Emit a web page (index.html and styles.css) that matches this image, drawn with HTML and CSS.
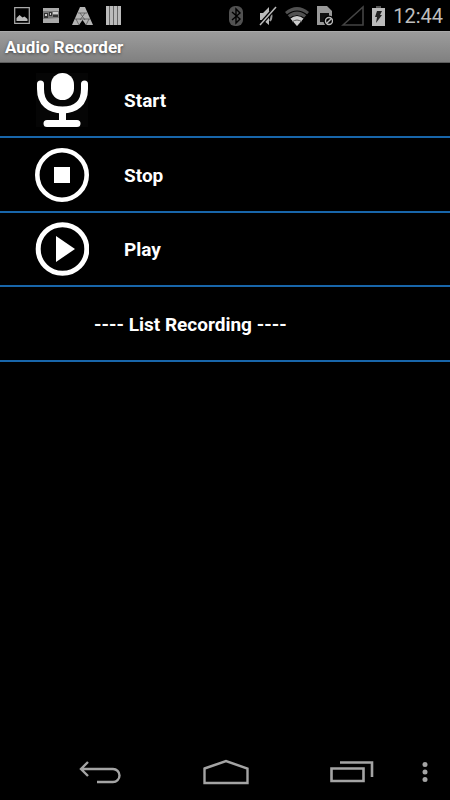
FILE: index.html
```html
<!DOCTYPE html>
<html lang="en">
<head>
<meta charset="utf-8">
<meta name="viewport" content="width=device-width, initial-scale=1">
<title>Audio Recorder</title>
<link rel="stylesheet" href="styles.css">
</head>
<body>
<div class="status">
  <div class="status-group notices">
    <svg width="16" height="17" viewBox="0 0 16 17"><path d="M.7.7h14.6v15.6H.7z" fill="none" stroke="#aaa" stroke-width="1.2"/><path d="M2.500 14V11L5.500 8l3 2.500 2-1 3 2.500V14z" fill="#bbb"/></svg>
    <svg width="16" height="15" viewBox="0 0 16 15"><path d="M0 0h16v15H0z" fill="#777"/><path d="M0 0h16v3H0zM0 11l16-1v5H0z" fill="#aaa"/><path d="M1 5h4v5H1zM6 4h3v4H6zM10 7h5v2h-5z" fill="#333"/><path d="M2 6h2v2H2zM7 5h1v2H7zM10 4h5v2h-5z" fill="#ccc"/></svg>
    <svg width="21" height="18" viewBox="0 0 21 18"><path d="M8 0h5l8 18h-7l-3.500-5L7 18H0z" fill="#b4b4b4"/><path d="M6 6h9M3 12h15M8 6l5 7M13 6l-5 7M4 12l3 6M17 12l-3 6" stroke="#555" stroke-width=".8" fill="none"/></svg>
    <svg width="15" height="19" viewBox="0 0 15 19"><path d="M0 0h15v19H0z" fill="#bbb"/><path d="M3.500 0v19M7.500 0v19M11.500 0v19" stroke="#666"/></svg>
  </div>
  <div class="status-group system">
    <svg width="22" height="20" viewBox="0 0 22 20"><rect width="14" height="20" rx="6" fill="#515151"/><path d="M3 6l8 7-4 4V3l4 4-8 7" fill="none" stroke="#000" stroke-width="1.400"/></svg>
    <svg width="18" height="20" viewBox="0 0 18 20"><path d="M1 7h3l6-6v18l-6-5H1z" fill="#bbb"/><path d="M11 5q3 5 0 10" fill="none" stroke="#999" stroke-width="2"/><path d="M1 19L16 2" stroke="#000" stroke-width="4"/><path d="M1 19L17 1" stroke="#bbb" stroke-width="1.500"/></svg>
    <svg width="24" height="20" viewBox="0 0 24 20"><path d="M0 6Q12-4 24 6L12 20z" fill="#515151"/><path d="M5 12q7-6 14 0l-7 8z" fill="#ccc"/><path d="M2 9q10-8 20 0M4.500 12.500q7.500-6 15 0" fill="none" stroke="#000" stroke-width="1.200"/><path d="M7 16q5-4 10 0" fill="none" stroke="#555"/></svg>
    <svg width="16" height="20" viewBox="0 0 16 20"><path d="M0 0h10l5 5v14H0z" fill="#999"/><path d="M3 7h9v9H3z" fill="#111"/><circle cx="12" cy="15" r="5.500" fill="#000"/><circle cx="12" cy="15" r="3.500" fill="none" stroke="#bbb" stroke-width="1.400"/><path d="M9.500 17.500l5-5" stroke="#bbb" stroke-width="1.400"/></svg>
    <svg width="23" height="21" viewBox="0 0 23 21"><path d="M2 20L22 2v18z" fill="none" stroke="#444" stroke-width="1.600"/></svg>
    <svg width="13" height="20" viewBox="0 0 13 20"><path d="M4 0h5v2H4z" fill="#555"/><path d="M0 2h13v18H0z" fill="#bbb"/><path d="M5 5h5L8 9h2l-6 8 1-6H3z" fill="#222"/></svg>
    <time class="clock">12:44</time>
  </div>
</div>
<header class="titlebar"><h1>Audio Recorder</h1></header>
<main class="menu">
  <button class="row" type="button">
    <svg class="icon" viewBox="0 0 54 54"><path d="M1 0h52v54H1z" fill="#050505"/><rect x="16" y="0" width="23" height="27" rx="11.500" fill="#fff"/><path d="M5.500 11v5c0 14 9 21 22 21s22-7 22-21v-5M27.500 37v13M12 50.500h30" fill="none" stroke="#fff" stroke-width="7" stroke-linecap="round"/></svg>
    <span class="label">Start</span>
  </button>
  <button class="row" type="button">
    <svg class="icon" viewBox="0 0 54 54"><circle cx="27" cy="27" r="24.700" fill="none" stroke="#fff" stroke-width="4.600"/><path d="M19 19h16v16H19z" fill="#fff"/></svg>
    <span class="label">Stop</span>
  </button>
  <button class="row" type="button">
    <svg class="icon" viewBox="0 0 54 54"><circle cx="27.500" cy="27" r="24.300" fill="none" stroke="#fff" stroke-width="5"/><path d="M21 14v26l19-13z" fill="#fff"/></svg>
    <span class="label">Play</span>
  </button>
  <button class="row list" type="button"><span class="label">---- List Recording ----</span></button>
</main>
<nav class="navbar">
  <button class="nav-key" type="button" aria-label="Back"><svg width="42" height="24" viewBox="0 0 42 24"><path d="M2 9h32a6.500 6.500 0 0 1 0 13H18M9 2L2 9l7 7" fill="none" stroke="#a4a4a4" stroke-width="2.400"/></svg></button>
  <button class="nav-key" type="button" aria-label="Home"><svg width="46" height="26" viewBox="0 0 46 26"><path d="M1.500 9.500L23 2l21.500 7.500V24h-43z" fill="none" stroke="#a4a4a4" stroke-width="2.400"/></svg></button>
  <button class="nav-key" type="button" aria-label="Recent apps"><svg width="44" height="24" viewBox="0 0 44 24"><path d="M1.500 8.500h32V21h-32zM10 2.500h32V17" fill="none" stroke="#a4a4a4" stroke-width="2.600"/></svg></button>
  <button class="nav-key more" type="button" aria-label="More options"><svg width="6" height="20" viewBox="0 0 6 20"><g fill="#a4a4a4"><circle cx="3" cy="2.500" r="2.500"/><circle cx="3" cy="10" r="2.500"/><circle cx="3" cy="17.500" r="2.500"/></g></svg></button>
</nav>
</body>
</html>
```
FILE: styles.css
```css
* { box-sizing: border-box; }

body {
  margin: 0;
  min-height: 100vh;
  display: flex;
  flex-direction: column;
  background: #000;
  color: #fff;
  font-family: Roboto, "Liberation Sans", sans-serif;
}

svg { display: block; flex: none; }

button {
  margin: 0;
  padding: 0;
  border: 0;
  background: none;
  color: inherit;
  font: inherit;
}

.status {
  height: 31px;
  display: flex;
  align-items: center;
  justify-content: space-between;
  padding: 0 7px 0 14px;
}

.status-group { display: flex; align-items: center; }
.notices { gap: 13px; }
.system { gap: 8px; }

.clock {
  font-size: 20px;
  line-height: 24px;
  color: #bebebe;
}

.titlebar {
  height: 32px;
  padding: 0 5px;
  display: flex;
  align-items: center;
  background: linear-gradient(#9c9c9c, #808080);
  border-top: 1px solid #aaa;
  border-bottom: 1px solid #5c5c5c;
}

.titlebar h1 {
  margin: 0;
  font-size: 17px;
  line-height: 20px;
  font-weight: 700;
  text-shadow: 0 1px 3px #444;
}

.menu { flex: 1; }

.row {
  width: 100%;
  height: 75px;
  display: flex;
  align-items: center;
  gap: 35px;
  padding-left: 35px;
  border-bottom: 2px solid #1866aa;
  font-size: 19px;
  line-height: 24px;
  font-weight: 700;
  text-align: left;
}

.row:nth-child(3) { height: 74px; }

.label { padding-top: 2px; }

.list { padding-left: 94px; }

.icon { width: 54px; height: 54px; }

.navbar {
  height: 56px;
  display: grid;
  grid-template-columns: repeat(3, 1fr) 35px;
  padding-left: 37px;
}

.nav-key {
  display: flex;
  align-items: center;
  justify-content: center;
}

.more { justify-content: flex-end; padding-right: 22px; }
```
